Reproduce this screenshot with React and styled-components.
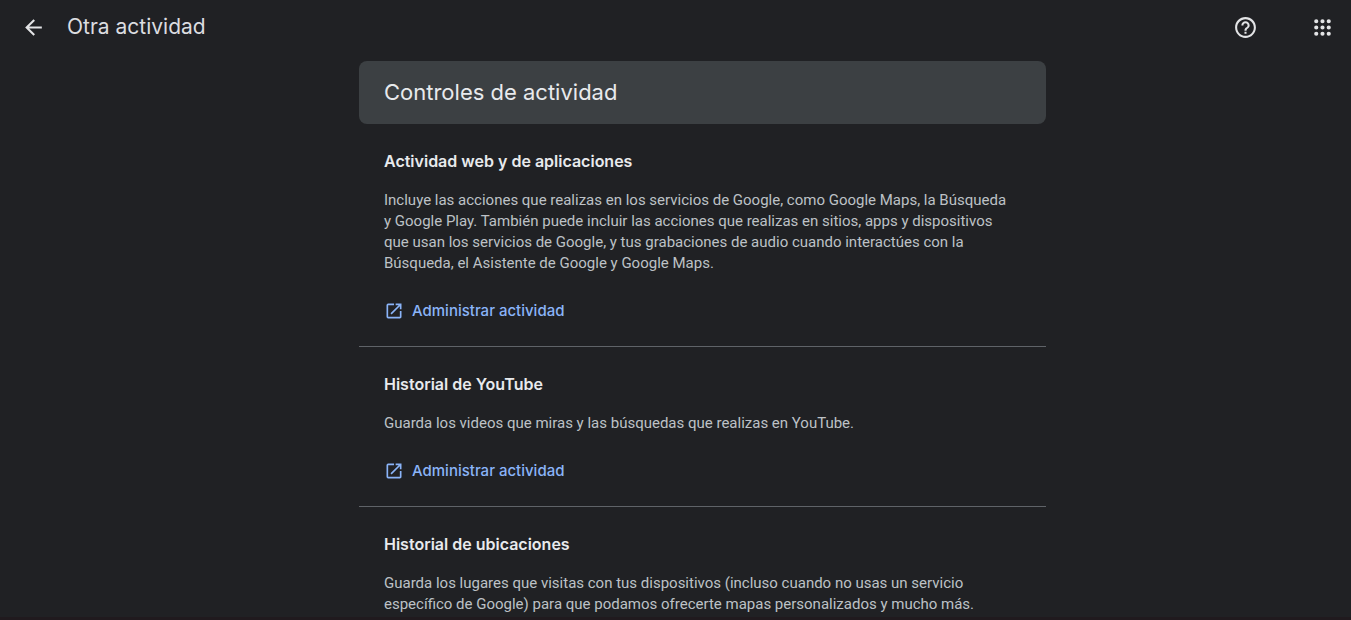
import React from "react";
import styled, { createGlobalStyle } from "styled-components";

const GlobalStyle = createGlobalStyle`
  * { box-sizing: border-box; }
  html, body { margin: 0; background: #202124; }
  body {
    font-family: Roboto, "Liberation Sans", sans-serif;
    color: #e8eaed;
  }
  h1, h2, h3, p { margin: 0; }
`;

const display = `"Google Sans", Inter, "Liberation Sans", sans-serif`;

const Page = styled.div`
  height: 100vh;
  overflow: hidden;
  border-bottom: 3px solid #201a1e;
`;

const TopBar = styled.header`
  display: flex;
  align-items: center;
  height: 54px;
  padding: 0 16px 0 21px;
`;

const IconButton = styled.button`
  display: flex;
  padding: 0;
  border: 0;
  background: none;
  color: #e3e4e6;
  cursor: pointer;
`;

const PageTitle = styled.h1`
  margin-left: 21px;
  font: 400 21px/28px ${display};
  color: #dcdde0;
`;

const Actions = styled.div`
  display: flex;
  gap: 52px;
  margin-left: auto;
`;

const Content = styled.main`
  padding: 7px 0 0 54px;
`;

const Column = styled.div`
  max-width: 687px;
  margin: 0 auto;
`;

const Banner = styled.div`
  padding: 15px 25px 16px;
  border-radius: 8px;
  background: #3c4043;
`;

const BannerTitle = styled.h2`
  font: 400 22px/32px ${display};
  color: #e8eaed;
`;

const Section = styled.section`
  padding: 25px;
  border-bottom: 1px solid #5f6368;
`;

const SectionTitle = styled.h3`
  font: 600 16px/24px ${display};
  color: #e8eaed;
`;

const Description = styled.p`
  margin-top: 17px;
  padding-right: 8px;
  font-size: 15px;
  line-height: 21px;
  color: #bdc1c6;
`;

const ManageLink = styled.a`
  display: flex;
  align-items: center;
  gap: 8px;
  width: fit-content;
  margin-top: 26px;
  font: 500 15px/21px ${display};
  color: #8ab4f8;
  text-decoration: none;
`;

const Icon = ({ size, d }) => (
  <svg width={size} height={size} viewBox="0 0 24 24" fill="currentColor" aria-hidden="true">
    <path d={d} />
  </svg>
);

const BACK = "M20 11H7.83l5.59-5.59L12 4l-8 8 8 8 1.41-1.41L7.83 13H20v-2z";
const HELP =
  "M11 18h2v-2h-2v2zm1-16C6.48 2 2 6.48 2 12s4.48 10 10 10 10-4.480 10-10S17.520 2 12 2zm0 18c-4.410 0-8-3.590-8-8s3.590-8 8-8 8 3.590 8 8-3.590 8-8 8zm0-14c-2.210 0-4 1.790-4 4h2c0-1.100.9-2 2-2s2 .9 2 2c0 2-3 1.750-3 5h2c0-2.250 3-2.500 3-5 0-2.210-1.790-4-4-4z";
const APPS =
  "M6 8a2 2 0 1 0 0-4 2 2 0 0 0 0 4zm6 12a2 2 0 1 0 0-4 2 2 0 0 0 0 4zm-6 0a2 2 0 1 0 0-4 2 2 0 0 0 0 4zm0-6a2 2 0 1 0 0-4 2 2 0 0 0 0 4zm6 0a2 2 0 1 0 0-4 2 2 0 0 0 0 4zm6-6a2 2 0 1 0 0-4 2 2 0 0 0 0 4zm-6 0a2 2 0 1 0 0-4 2 2 0 0 0 0 4zm6 6a2 2 0 1 0 0-4 2 2 0 0 0 0 4zm0 6a2 2 0 1 0 0-4 2 2 0 0 0 0 4z";
const OPEN =
  "M19 19H5V5h7V3H5a2 2 0 0 0-2 2v14a2 2 0 0 0 2 2h14c1.100 0 2-.9 2-2v-7h-2v7zM14 3v2h3.590l-9.830 9.830 1.410 1.410L19 6.410V10h2V3h-7z";

const sections = [
  {
    title: "Actividad web y de aplicaciones",
    text: "Incluye las acciones que realizas en los servicios de Google, como Google Maps, la Búsqueda y Google Play. También puede incluir las acciones que realizas en sitios, apps y dispositivos que usan los servicios de Google, y tus grabaciones de audio cuando interactúes con la Búsqueda, el Asistente de Google y Google Maps.",
    link: "Administrar actividad",
  },
  {
    title: "Historial de YouTube",
    text: "Guarda los videos que miras y las búsquedas que realizas en YouTube.",
    link: "Administrar actividad",
  },
  {
    title: "Historial de ubicaciones",
    text: "Guarda los lugares que visitas con tus dispositivos (incluso cuando no usas un servicio específico de Google) para que podamos ofrecerte mapas personalizados y mucho más.",
  },
];

export default function App() {
  return (
    <Page>
      <GlobalStyle />
      <TopBar>
        <IconButton aria-label="Atrás"><Icon size={25} d={BACK} /></IconButton>
        <PageTitle>Otra actividad</PageTitle>
        <Actions>
          <IconButton aria-label="Ayuda"><Icon size={25} d={HELP} /></IconButton>
          <IconButton aria-label="Aplicaciones de Google"><Icon size={25} d={APPS} /></IconButton>
        </Actions>
      </TopBar>
      <Content>
        <Column>
          <Banner><BannerTitle>Controles de actividad</BannerTitle></Banner>
          {sections.map(({ title, text, link }) => (
            <Section key={title}>
              <SectionTitle>{title}</SectionTitle>
              <Description>{text}</Description>
              {link && (
                <ManageLink href="#"><Icon size={20} d={OPEN} />{link}</ManageLink>
              )}
            </Section>
          ))}
        </Column>
      </Content>
    </Page>
  );
}
